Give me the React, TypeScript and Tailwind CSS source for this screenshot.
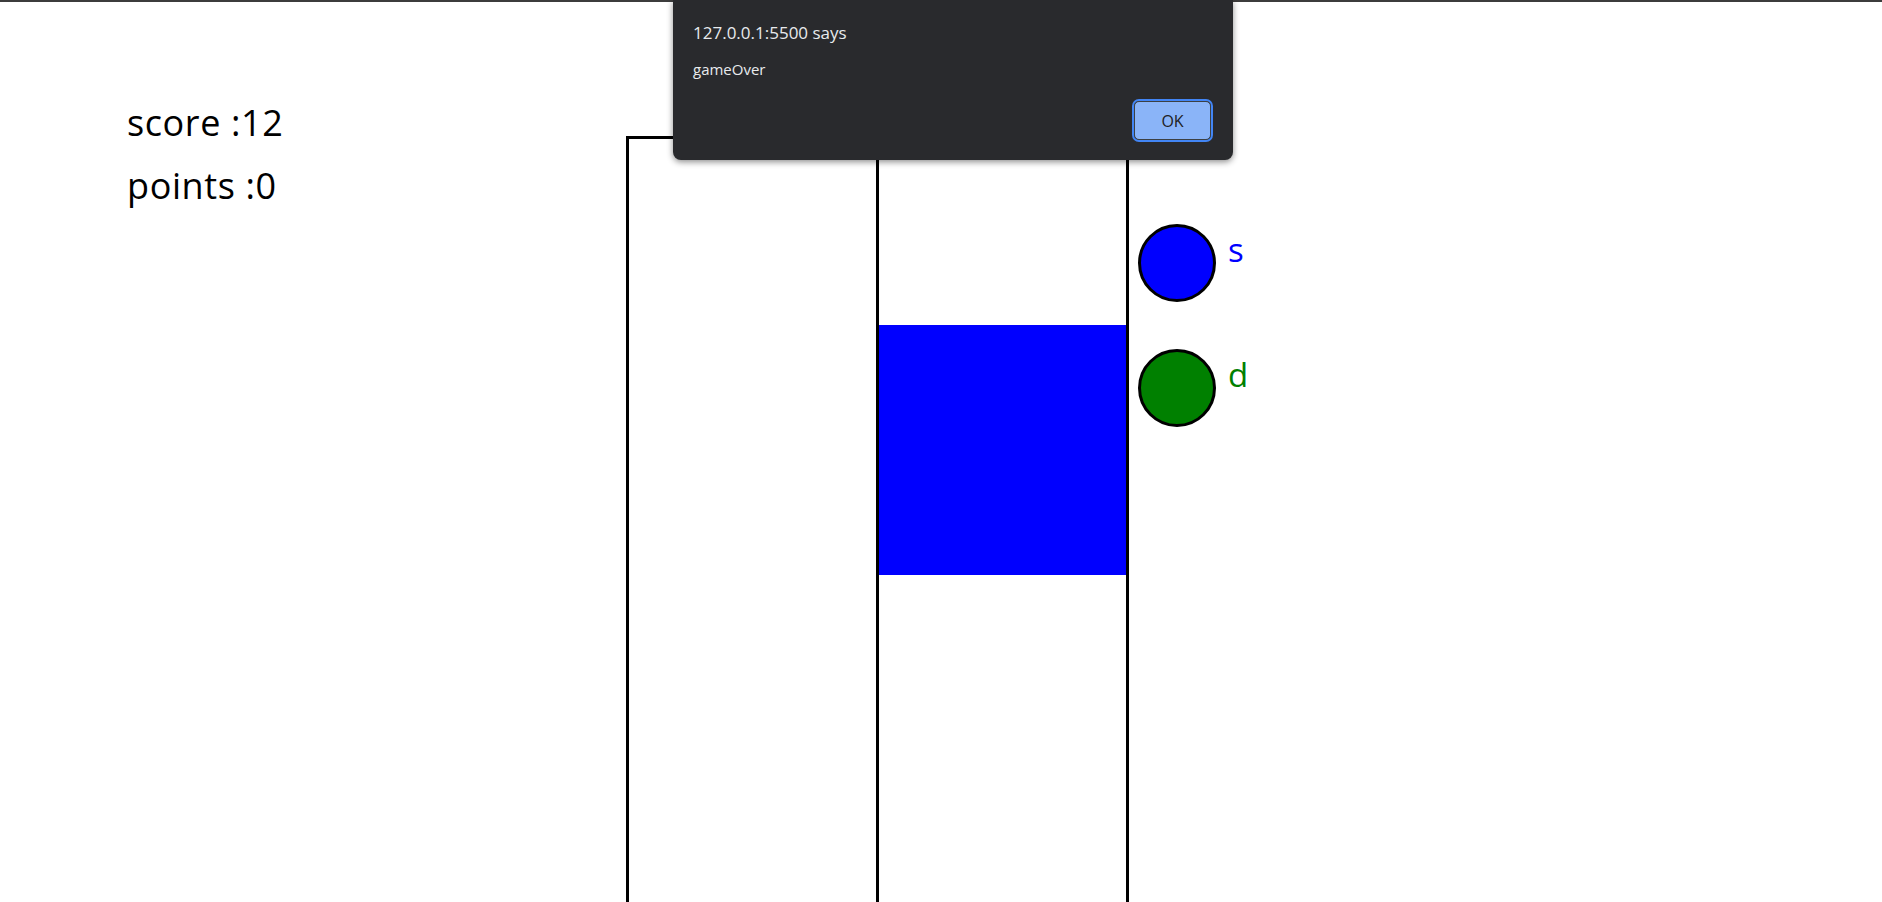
const dialogFont = { fontFamily: '"Open Sans", "Noto Sans", sans-serif' };

function Key({ color, label }: { color: string; label: string }) {
  return (
    <div className="flex items-start gap-[12px]">
      <div
        className={`h-[78px] w-[78px] rounded-full border-[3px] border-black ${
          color === "blue" ? "bg-[#0000ff]" : "bg-[#008000]"
        }`}
      />
      <span
        className={`mt-[9px] font-['Open_Sans',sans-serif] text-[33px] leading-none ${
          color === "blue" ? "text-[#0000ff]" : "text-[#008000]"
        }`}
      >
        {label}
      </span>
    </div>
  );
}

export default function App() {
  return (
    <div className="relative h-[902px] w-full overflow-hidden bg-white">
      <div className="h-[2px] bg-[#3c3c3c]" />

      <div className="flex">
        {/* score */}
        <div className="w-[626px] shrink-0 pl-[127px] pt-[103px] font-['Comic_Sans_MS','Open_Sans',sans-serif] text-[36px] leading-none tracking-[0.6px] text-black">
          <div>score :12</div>
          <div className="mt-[27px]">points :0</div>
        </div>

        {/* board */}
        <div className="mt-[134px] flex shrink-0 border-t-[3px] border-black">
          <div className="h-[900px] w-[250px] border-l-[3px] border-black" />
          <div className="h-[900px] w-[253px] border-x-[3px] border-black">
            <div className="mt-[186px] h-[250px] bg-[#0000ff]" />
          </div>
        </div>

        {/* keys */}
        <div className="ml-[9px] mt-[222px] flex flex-col gap-[47px]">
          <Key color="blue" label="s" />
          <Key color="green" label="d" />
        </div>
      </div>

      {/* alert */}
      <div
        className="absolute left-[673px] top-0 flex h-[160px] w-[560px] flex-col rounded-b-[8px] bg-[#292a2d] px-[20px] shadow-[0_2px_6px_rgba(0,0,0,0.45)]"
        style={dialogFont}
      >
        <div className="pt-[24px] text-[17px] leading-none text-[#e8eaed]">127.0.0.1:5500 says</div>
        <div className="mt-[21px] text-[15px] leading-none text-[#e8eaed]">gameOver</div>
        <div className="mt-auto mb-[18px] flex justify-end">
          <button className="rounded-[7px] border-2 border-[#4285f4] p-0">
            <span className="flex h-[39px] w-[77px] items-center justify-center rounded-[5px] border border-[#3c4043] bg-[#8ab4f8] text-[16px] text-[#202124]">
              OK
            </span>
          </button>
        </div>
      </div>
    </div>
  );
}
